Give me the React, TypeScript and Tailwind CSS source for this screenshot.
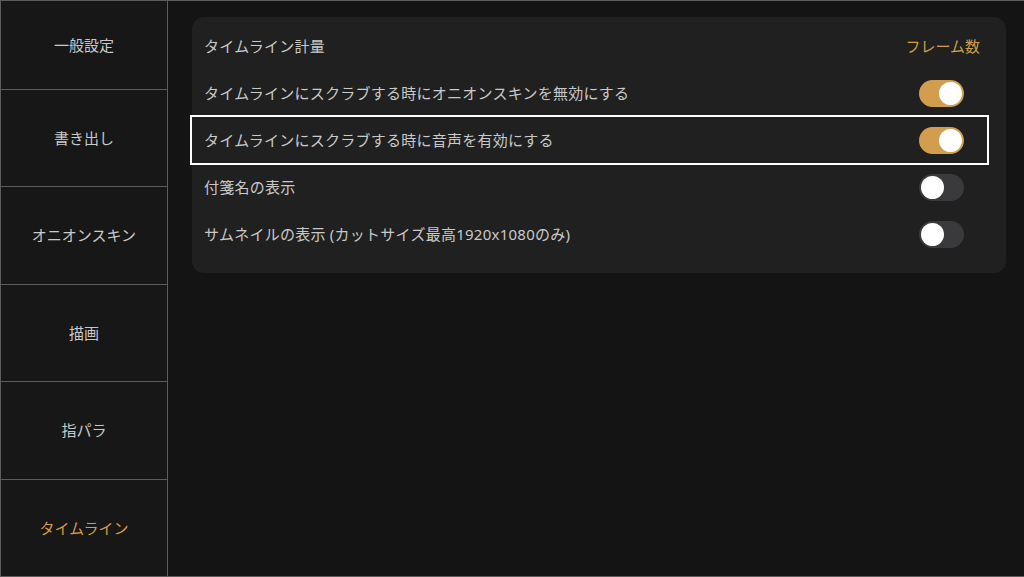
import React from "react";

const MENU = ["一般設定", "書き出し", "オニオンスキン", "描画", "指パラ", "タイムライン"];

type Row = { label: string; value?: string; on?: boolean };

const ROWS: Row[] = [
  { label: "タイムライン計量", value: "フレーム数" },
  { label: "タイムラインにスクラブする時にオニオンスキンを無効にする", on: true },
  { label: "タイムラインにスクラブする時に音声を有効にする", on: true },
  { label: "付箋名の表示", on: false },
  { label: "サムネイルの表示 (カットサイズ最高1920x1080のみ)", on: false },
];

function Toggle({ on }: { on: boolean }) {
  return (
    <div
      className={
        "mr-[16px] flex h-[27px] w-[45px] items-center rounded-full px-[2px] " +
        (on ? "justify-end bg-[#d29d4d]" : "justify-start bg-[#3a3a3c]")
      }
    >
      <div className="h-[23px] w-[23px] rounded-full bg-white" />
    </div>
  );
}

export default function App() {
  return (
    <div
      className="flex h-[577px] w-[1024px] overflow-hidden border-y border-l border-[#5c5c5c] bg-[#141414]"
      style={{ fontFamily: '"Noto Sans", "Noto Sans CJK JP", sans-serif' }}
    >
      <nav className="flex w-[167px] shrink-0 flex-col border-r border-[#5c5c5c] bg-[#171717]">
        {MENU.map((m, i) => (
          <div
            key={m}
            className={
              "flex items-center justify-center text-[15px] " +
              (i === 0 ? "h-[89px] shrink-0 " : "flex-1 ") +
              (i < MENU.length - 1 ? "border-b border-[#5c5c5c] " : "") +
              (i === MENU.length - 1 ? "text-[#d29d4d]" : "text-[#c9c9c9]")
            }
          >
            {m}
          </div>
        ))}
      </nav>

      <main className="relative flex-1 pl-[24px] pr-[18px] pt-[16px]">
        <div className="rounded-[12px] bg-[#202020] pb-[15px] pt-[6px] pl-[12px] pr-[26px]">
          {ROWS.map((r) => (
            <div key={r.label} className="flex h-[47px] items-center justify-between">
              <span className="text-[15px] tracking-[0.25px] text-[#c9c9c9]">{r.label}</span>
              {r.value ? (
                <span className="text-[15px] text-[#d29d4d]">{r.value}</span>
              ) : (
                <Toggle on={!!r.on} />
              )}
            </div>
          ))}
        </div>
        <div className="pointer-events-none absolute left-[22px] top-[114px] h-[50px] w-[799px] border-2 border-white" />
      </main>
    </div>
  );
}
